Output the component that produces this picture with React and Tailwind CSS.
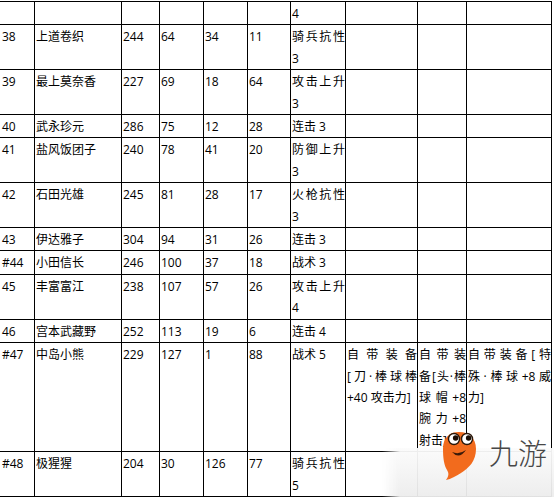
import React from 'react';

/* one row = 10 cells; a cell is a list of lines (all but the last are justified) */
const rows = [
  [[], [], [], [], [], [], [['4']], [], [], []],
  ['38', '上道卷织', '244', '64', '34', '11', ['骑兵抗性', '3']],
  ['39', '最上莫奈香', '227', '69', '18', '64', ['攻击上升', '3']],
  ['40', '武永珍元', '286', '75', '12', '28', '连击 3'],
  ['41', '盐风饭团子', '240', '78', '41', '20', ['防御上升', '3']],
  ['42', '石田光雄', '245', '81', '28', '17', ['火枪抗性', '3']],
  ['43', '伊达雅子', '304', '94', '31', '26', '连击 3'],
  ['#44', '小田信长', '246', '100', '37', '18', '战术 3'],
  ['45', '丰富富江', '238', '107', '57', '26', ['攻击上升', '4']],
  ['46', '宫本武藏野', '252', '113', '19', '6', '连击 4'],
  ['#47', '中岛小熊', '229', '127', '1', '88', '战术 5',
    ['自带装备', '[刀·棒球棒', '+40 攻击力]'],
    ['自带装', '备[头·棒', '球帽+8', '腕力+8', '射击]'],
    ['自带装备[特', '殊·棒球+8威', '力]']],
  ['#48', '极猩猩', '204', '30', '126', '77', ['骑兵抗性', '5']],
];

const Cell = ({ value, first }) => {
  const lines = value == null ? [] : Array.isArray(value) ? value : [value];
  return (
    <div className={`border-r border-b border-black pt-px ${first ? 'pl-[2px]' : 'pl-px'}`}>
      {lines.map((l, i) => (
        <div key={i} className={i < lines.length - 1 ? 'text-justify [text-align-last:justify]' : ''}>
          {l}
        </div>
      ))}
    </div>
  );
};

const Mascot = () => (
  <svg width="36" height="53" viewBox="0 0 36 53">
    <path
      d="M18 4 C28 4 35 10 35 21 C35 33 28 40 20 45 C15 48 10 51 5 52 C8 48 8 45 6 42 C3 37 2 30 2 21 C2 10 8 4 18 4 Z"
      fill="#f26b1d"
    />
    <circle cx="13" cy="11" r="5.5" fill="#fff" stroke="#2a1608" strokeWidth="1.4" />
    <circle cx="26" cy="11" r="5.5" fill="#fff" stroke="#2a1608" strokeWidth="1.4" />
    <circle cx="14.6" cy="10" r="2.7" fill="#1a0d05" />
    <circle cx="27.6" cy="10" r="2.7" fill="#1a0d05" />
    <path d="M11 24 Q18 32 25 22 Q18 27 11 24 Z" fill="#3a1a0a" />
  </svg>
);

export default function App() {
  return (
    <div className="relative w-[554px] h-[497px] overflow-hidden bg-white text-black font-['Open_Sans','Noto_Sans_CJK_SC',sans-serif] text-[12px] leading-[21.4px]">
      <div className="mt-px w-[552px] grid grid-cols-[35px_87px_38px_44px_44px_43px_55px_72px_49px_85px] border-t border-black">
        {rows.map((r, ri) =>
          Array.from({ length: 10 }).map((_, ci) => (
            <Cell key={`${ri}-${ci}`} value={r[ci] && r[ci].length !== 0 ? r[ci] : null} first={ci === 0} />
          ))
        )}
      </div>

      {/* watermark */}
      <div className="absolute right-0 bottom-0 w-[172px] h-[49px] bg-linear-to-b from-[#fbfbfb]/95 to-[#ececec]/95 [mask-image:linear-gradient(to_right,transparent,black_18px)]" />
      <div className="absolute left-[441px] top-[428px]">
        <Mascot />
      </div>
      <div className="absolute left-[489px] top-[438px] text-[29px] leading-none text-[#474747] font-['Noto_Sans_CJK_SC',sans-serif] font-light">
        九游
      </div>
    </div>
  );
}
